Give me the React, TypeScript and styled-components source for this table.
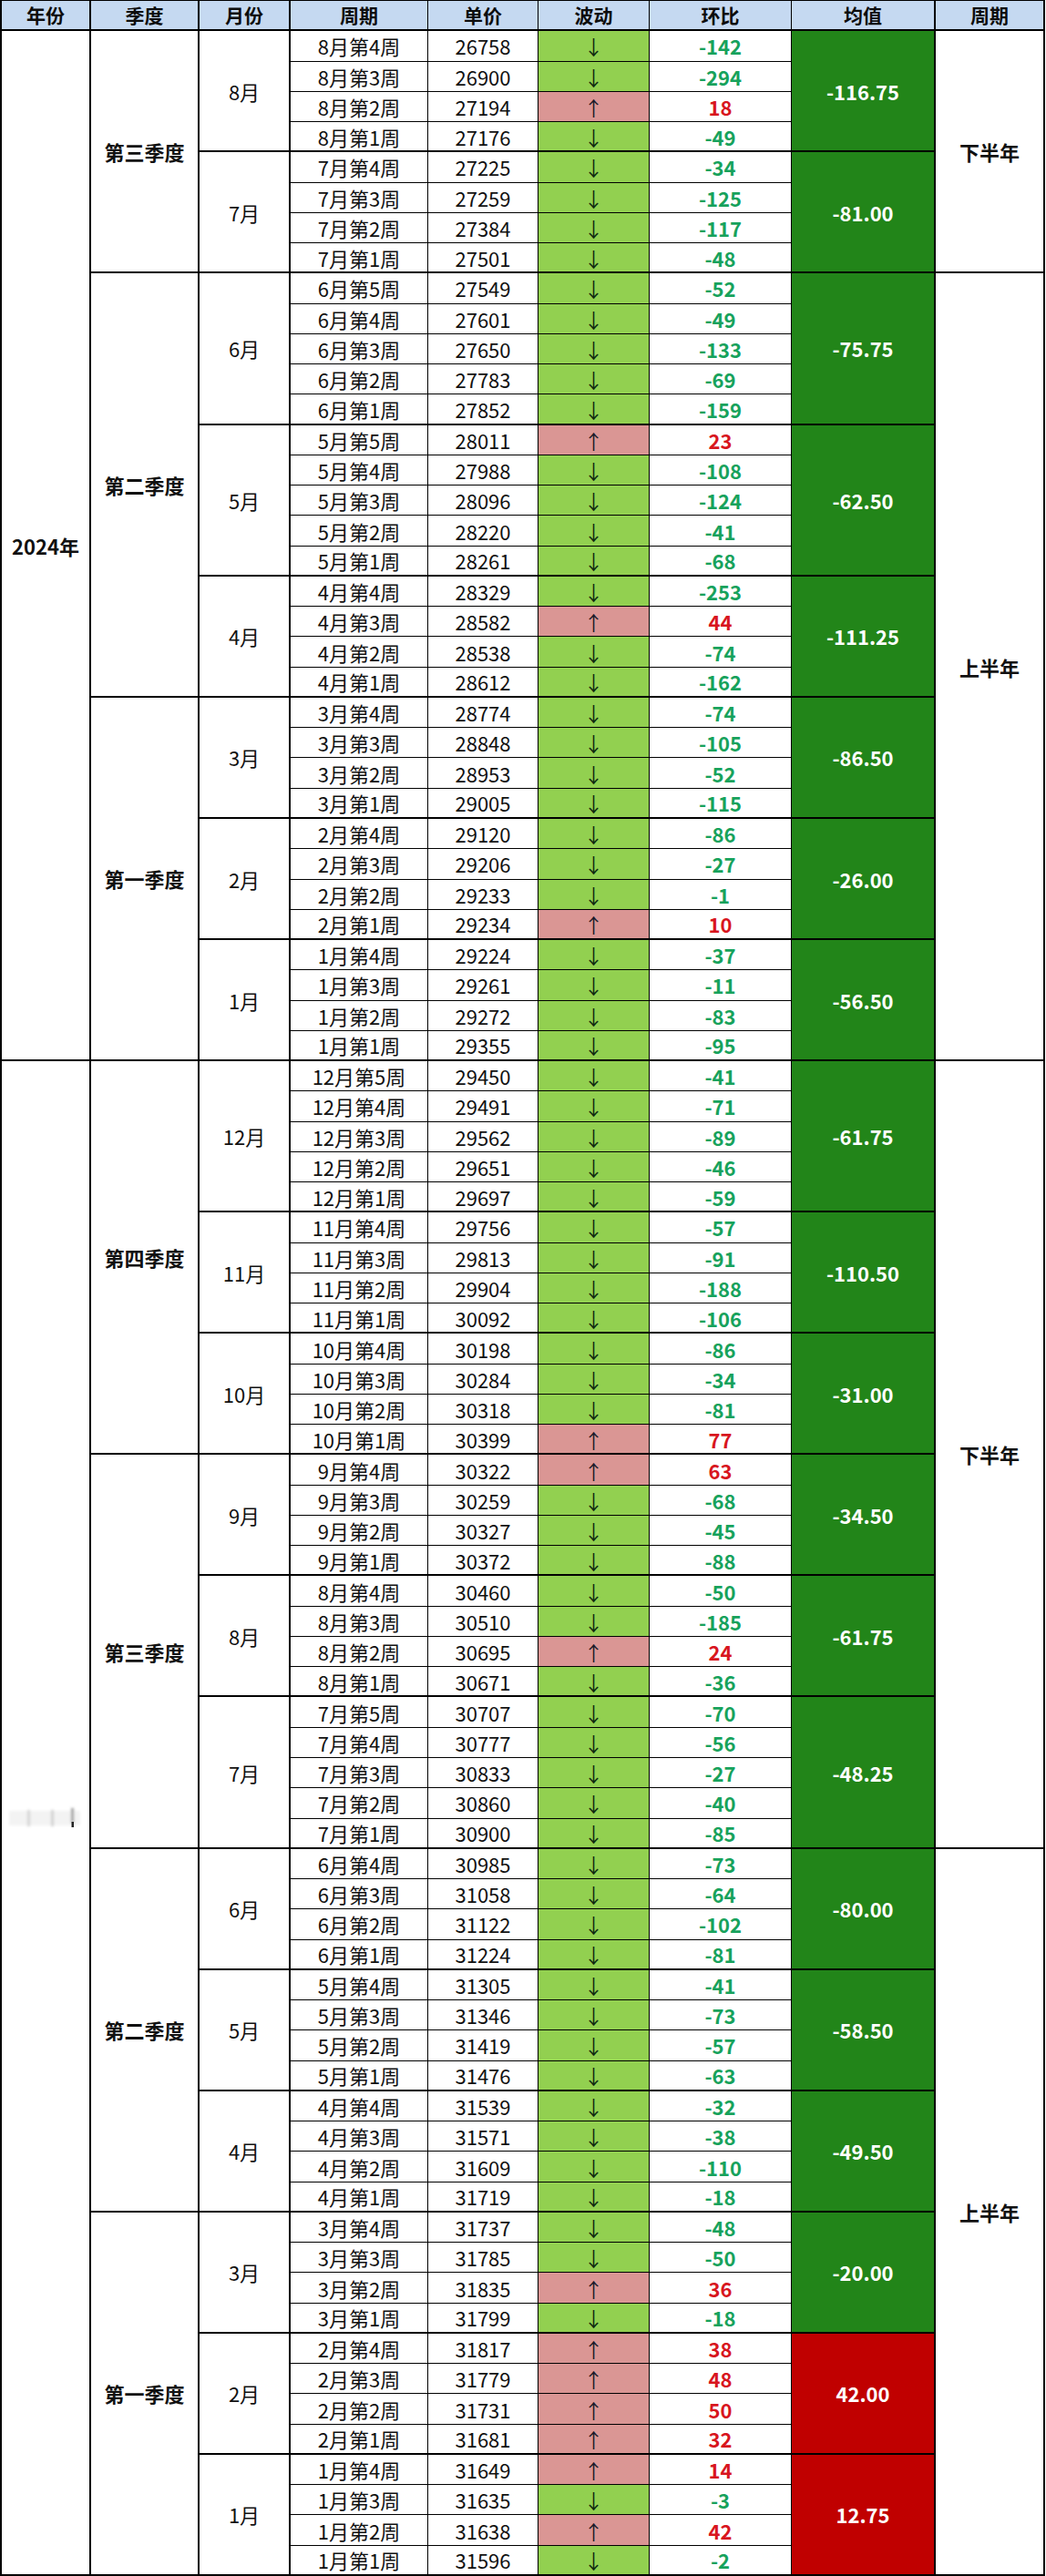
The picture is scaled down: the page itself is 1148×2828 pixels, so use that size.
import React from 'react';
import styled, { createGlobalStyle } from 'styled-components';

const GlobalStyle = createGlobalStyle`
  html, body { margin: 0; padding: 0; background: #fff; }
  body {
    font-family: "Noto Sans CJK SC", "Noto Sans", "DejaVu Sans", sans-serif;
    color: #111;
  }
  * { box-sizing: border-box; }
`;

type Week = [number, number, number]; // [week no, price, ratio]
type Month = { m: number; mean: string; weeks: Week[] };
type Quarter = { name: string; months: Month[] };
type Half = { name: string; quarters: Quarter[] };
type Year = { name: string; smudge?: boolean; halves: Half[] };

const data: Year[] = [
  {
    name: '2024年',
    halves: [
      {
        name: '下半年',
        quarters: [
          {
            name: '第三季度',
            months: [
              { m: 8, mean: '-116.75', weeks: [[4, 26758, -142], [3, 26900, -294], [2, 27194, 18], [1, 27176, -49]] },
              { m: 7, mean: '-81.00', weeks: [[4, 27225, -34], [3, 27259, -125], [2, 27384, -117], [1, 27501, -48]] },
            ],
          },
        ],
      },
      {
        name: '上半年',
        quarters: [
          {
            name: '第二季度',
            months: [
              { m: 6, mean: '-75.75', weeks: [[5, 27549, -52], [4, 27601, -49], [3, 27650, -133], [2, 27783, -69], [1, 27852, -159]] },
              { m: 5, mean: '-62.50', weeks: [[5, 28011, 23], [4, 27988, -108], [3, 28096, -124], [2, 28220, -41], [1, 28261, -68]] },
              { m: 4, mean: '-111.25', weeks: [[4, 28329, -253], [3, 28582, 44], [2, 28538, -74], [1, 28612, -162]] },
            ],
          },
          {
            name: '第一季度',
            months: [
              { m: 3, mean: '-86.50', weeks: [[4, 28774, -74], [3, 28848, -105], [2, 28953, -52], [1, 29005, -115]] },
              { m: 2, mean: '-26.00', weeks: [[4, 29120, -86], [3, 29206, -27], [2, 29233, -1], [1, 29234, 10]] },
              { m: 1, mean: '-56.50', weeks: [[4, 29224, -37], [3, 29261, -11], [2, 29272, -83], [1, 29355, -95]] },
            ],
          },
        ],
      },
    ],
  },
  {
    name: '',
    smudge: true,
    halves: [
      {
        name: '下半年',
        quarters: [
          {
            name: '第四季度',
            months: [
              { m: 12, mean: '-61.75', weeks: [[5, 29450, -41], [4, 29491, -71], [3, 29562, -89], [2, 29651, -46], [1, 29697, -59]] },
              { m: 11, mean: '-110.50', weeks: [[4, 29756, -57], [3, 29813, -91], [2, 29904, -188], [1, 30092, -106]] },
              { m: 10, mean: '-31.00', weeks: [[4, 30198, -86], [3, 30284, -34], [2, 30318, -81], [1, 30399, 77]] },
            ],
          },
          {
            name: '第三季度',
            months: [
              { m: 9, mean: '-34.50', weeks: [[4, 30322, 63], [3, 30259, -68], [2, 30327, -45], [1, 30372, -88]] },
              { m: 8, mean: '-61.75', weeks: [[4, 30460, -50], [3, 30510, -185], [2, 30695, 24], [1, 30671, -36]] },
              { m: 7, mean: '-48.25', weeks: [[5, 30707, -70], [4, 30777, -56], [3, 30833, -27], [2, 30860, -40], [1, 30900, -85]] },
            ],
          },
        ],
      },
      {
        name: '上半年',
        quarters: [
          {
            name: '第二季度',
            months: [
              { m: 6, mean: '-80.00', weeks: [[4, 30985, -73], [3, 31058, -64], [2, 31122, -102], [1, 31224, -81]] },
              { m: 5, mean: '-58.50', weeks: [[4, 31305, -41], [3, 31346, -73], [2, 31419, -57], [1, 31476, -63]] },
              { m: 4, mean: '-49.50', weeks: [[4, 31539, -32], [3, 31571, -38], [2, 31609, -110], [1, 31719, -18]] },
            ],
          },
          {
            name: '第一季度',
            months: [
              { m: 3, mean: '-20.00', weeks: [[4, 31737, -48], [3, 31785, -50], [2, 31835, 36], [1, 31799, -18]] },
              { m: 2, mean: '42.00', weeks: [[4, 31817, 38], [3, 31779, 48], [2, 31731, 50], [1, 31681, 32]] },
              { m: 1, mean: '12.75', weeks: [[4, 31649, 14], [3, 31635, -3], [2, 31638, 42], [1, 31596, -2]] },
            ],
          },
        ],
      },
    ],
  },
];

const Sheet = styled.div`
  display: grid;
  width: max-content;
  height: 2828px;
  grid-template-columns: 98px 119px 100px 151px 121px 122px 156px 158px 120px;
  grid-template-rows: repeat(85, minmax(0, 1fr));
  border-left: 2px solid #000;
  border-top: 1px solid #000;
`;

const BaseCell = styled.div<{ $span?: number; $bottom?: number }>`
  display: flex;
  align-items: center;
  justify-content: center;
  min-width: 0;
  min-height: 0;
  overflow: hidden;
  white-space: nowrap;
  grid-row: span ${p => p.$span ?? 1};
  border-right: 1px solid #000;
  border-bottom: ${p => p.$bottom ?? 1}px solid #000;
  font-size: 22px;
  line-height: 1;
  color: #111;
`;

const HeaderCell = styled(BaseCell)<{ $rw: number }>`
  background: #c5d9f1;
  font-weight: 700;
  font-size: 21px;
  color: #0d0d0d;
  border-right-width: ${p => p.$rw}px;
  border-bottom-width: 2px;
`;

const YearCell = styled(BaseCell)`
  grid-column: 1;
  border-right-width: 2px;
  border-bottom-width: 2px;
  font-weight: 700;
`;

const QuarterCell = styled(BaseCell)`
  grid-column: 2;
  border-right-width: 2px;
  border-bottom-width: 2px;
  font-weight: 700;
`;

const MonthCell = styled(BaseCell)`
  grid-column: 3;
  border-right-width: 2px;
  border-bottom-width: 2px;
`;

const WeekCell = styled(BaseCell)`
  grid-column: 4;
`;

const PriceCell = styled(BaseCell)`
  grid-column: 5;
`;

const TrendCell = styled(BaseCell)<{ $up: boolean }>`
  grid-column: 6;
  background: ${p => (p.$up ? '#da9694' : '#92d050')};
  color: ${p => (p.$up ? '#1a1a2a' : '#102a10')};
  font-size: 22px;
`;

const RatioCell = styled(BaseCell)<{ $up: boolean }>`
  grid-column: 7;
  font-weight: 700;
  color: ${p => (p.$up ? '#d8161e' : '#17a25c')};
`;

const MeanCell = styled(BaseCell)<{ $up: boolean }>`
  grid-column: 8;
  border-right-width: 2px;
  border-bottom-width: 2px;
  background: ${p => (p.$up ? '#c00000' : '#228519')};
  color: #fff;
  font-weight: 700;
`;

const HalfCell = styled(BaseCell)`
  grid-column: 9;
  border-right-width: 2px;
  border-bottom-width: 2px;
  font-weight: 700;
`;

const Smudge = () => (
  <svg width="84" height="28" viewBox="0 0 84 28" aria-hidden="true">
    <defs>
      <filter id="blur" x="-20%" y="-20%" width="140%" height="140%">
        <feGaussianBlur stdDeviation="1.6" />
      </filter>
    </defs>
    <g filter="url(#blur)">
      <rect x="2" y="6" width="78" height="16" fill="#f3f3f3" />
      <rect x="22" y="5" width="3" height="18" fill="#d4d4d4" />
      <rect x="48" y="5" width="3" height="18" fill="#d0d0d0" />
      <rect x="70" y="3" width="3" height="16" fill="#9a9a9a" />
    </g>
    <rect x="70.5" y="18" width="2.5" height="6" fill="#222" />
  </svg>
);

const headers: [string, number][] = [
  ['年份', 2],
  ['季度', 2],
  ['月份', 2],
  ['周期', 1],
  ['单价', 1],
  ['波动', 1],
  ['环比', 1],
  ['均值', 2],
  ['周期', 2],
];

const count = {
  month: (m: Month) => m.weeks.length,
  quarter: (q: Quarter) => q.months.reduce((s, m) => s + m.weeks.length, 0),
  half: (h: Half) => h.quarters.reduce((s, q) => s + count.quarter(q), 0),
  year: (y: Year) => y.halves.reduce((s, h) => s + count.half(h), 0),
};

const fmt = (n: number) => (n > 0 ? String(n) : `-${Math.abs(n)}`);

export default function App() {
  const cells: React.ReactNode[] = [];
  data.forEach((y, yi) => {
    y.halves.forEach((h, hi) => {
      h.quarters.forEach((q, qi) => {
        q.months.forEach((m, mi) => {
          m.weeks.forEach((w, wi) => {
            const key = `${yi}-${hi}-${qi}-${mi}-${wi}`;
            const firstMonth = wi === 0;
            const firstQuarter = firstMonth && mi === 0;
            const firstHalf = firstQuarter && qi === 0;
            const firstYear = firstHalf && hi === 0;
            const last = wi === m.weeks.length - 1;
            const up = w[2] > 0;
            if (firstYear) {
              cells.push(
                <YearCell key={`y${key}`} $span={count.year(y)}>
                  {y.smudge ? <Smudge /> : y.name}
                </YearCell>
              );
            }
            if (firstQuarter) {
              cells.push(
                <QuarterCell key={`q${key}`} $span={count.quarter(q)}>
                  {q.name}
                </QuarterCell>
              );
            }
            if (firstMonth) {
              cells.push(
                <MonthCell key={`m${key}`} $span={count.month(m)}>
                  {m.m}月
                </MonthCell>
              );
            }
            cells.push(
              <WeekCell key={`w${key}`} $bottom={last ? 2 : 1}>
                {m.m}月第{w[0]}周
              </WeekCell>,
              <PriceCell key={`p${key}`} $bottom={last ? 2 : 1}>
                {w[1]}
              </PriceCell>,
              <TrendCell key={`t${key}`} $bottom={last ? 2 : 1} $up={up}>
                {up ? '↑' : '↓'}
              </TrendCell>,
              <RatioCell key={`r${key}`} $bottom={last ? 2 : 1} $up={up}>
                {fmt(w[2])}
              </RatioCell>
            );
            if (firstMonth) {
              cells.push(
                <MeanCell key={`a${key}`} $span={count.month(m)} $up={!m.mean.startsWith('-')}>
                  {m.mean}
                </MeanCell>
              );
            }
            if (firstHalf) {
              cells.push(
                <HalfCell key={`h${key}`} $span={count.half(h)}>
                  {h.name}
                </HalfCell>
              );
            }
          });
        });
      });
    });
  });

  return (
    <>
      <GlobalStyle />
      <Sheet>
        {headers.map(([t, rw], i) => (
          <HeaderCell key={`hd${i}`} $rw={rw}>
            {t}
          </HeaderCell>
        ))}
        {cells}
      </Sheet>
    </>
  );
}
